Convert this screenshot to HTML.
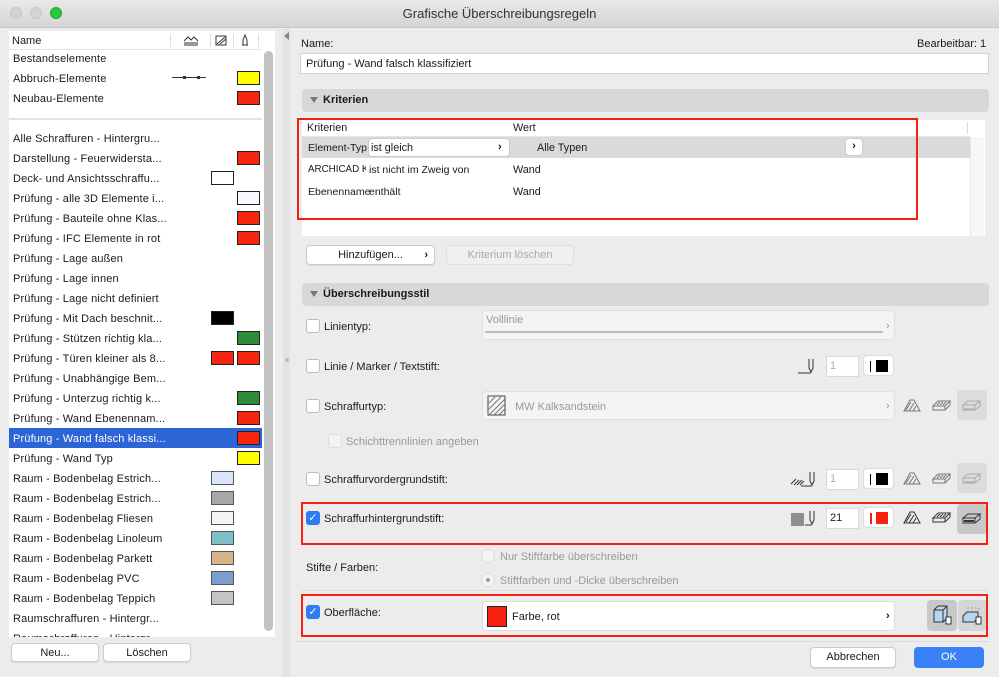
<!DOCTYPE html>
<html><head><meta charset="utf-8"><style>
*{box-sizing:border-box;margin:0;padding:0}
body{width:999px;height:677px;background:#ececec;font-family:"Liberation Sans",sans-serif;font-size:11px;color:#1a1a1a;position:relative;overflow:hidden}
.a{position:absolute}
.t{position:absolute;white-space:nowrap;line-height:14px}
.n{font-size:10.8px}
.sw{position:absolute;width:23px;height:14px;border:1px solid #222}
.red{background:#f62510}
.btn{position:absolute;background:#fff;border:1px solid #ccc;border-radius:4px;text-align:center;line-height:18px;box-shadow:0 1px 1px rgba(0,0,0,.08)}
.cb{position:absolute;width:14px;height:14px;border:1px solid #bdbdbd;border-radius:3px;background:#fff}
.cbon{background:#2f7bf5;border-color:#2f7bf5;color:#fff;font-size:11px;line-height:12px;text-align:center}
.bar{position:absolute;left:302px;width:687px;height:23px;background:#d8d8d8;border-radius:4px;font-weight:bold;line-height:23px;padding-left:21px;font-size:11px}
.tri{position:absolute;left:8px;top:8px;border-left:4px solid transparent;border-right:4px solid transparent;border-top:6px solid #777}
.dd{position:absolute;background:#f4f4f4;border:1px solid #e0e0e0;border-radius:4px}
.box{position:absolute;border:2px solid #f52010}
.in{position:absolute;background:#fff;border:1px solid #d8d8d8;height:21px;width:33px;line-height:19px;padding-left:3px;color:#aaa}
.cbtn{position:absolute;width:31px;height:21px;background:#fff;border:1px solid #ddd;border-radius:4px}
.gray{color:#999}
.ic{position:absolute}
</style></head><body>
<div class="a" style="left:0;top:0;width:999px;height:28px;background:linear-gradient(#e9e9e9,#d5d5d5);border-bottom:1px solid #c4c4c4"></div>
<div class="a" style="left:10px;top:7px;width:12px;height:12px;border-radius:6px;background:#d3d3d3;border:1px solid #c6c6c6"></div>
<div class="a" style="left:30px;top:7px;width:12px;height:12px;border-radius:6px;background:#d3d3d3;border:1px solid #c6c6c6"></div>
<div class="a" style="left:50px;top:7px;width:12px;height:12px;border-radius:6px;background:#2bc840;border:1px solid #22a934"></div>
<div class="t" style="left:0;width:999px;text-align:center;top:7px;font-size:13px;color:#333">Grafische Überschreibungsregeln</div>

<div class="a" style="left:9px;top:31px;width:266px;height:606px;background:#fff"></div>
<div class="a" style="left:9px;top:49px;width:253px;height:1px;background:#e4e4e4"></div>
<div class="t" style="left:12px;top:34px;font-size:11px">Name</div>
<div class="a" style="left:170px;top:34px;width:1px;height:13px;background:#ddd"></div>
<div class="a" style="left:210px;top:34px;width:1px;height:13px;background:#ddd"></div>
<div class="a" style="left:233px;top:34px;width:1px;height:13px;background:#ddd"></div>
<div class="a" style="left:258px;top:34px;width:1px;height:13px;background:#ddd"></div>
<svg class="a" style="left:183px;top:35px" width="16" height="11"><path d="M1 6 L5 2 L8 5 L11 2 L15 6 M1 8H15 M1 10H15" stroke="#333" fill="none"/></svg>
<svg class="a" style="left:215px;top:35px" width="13" height="11"><rect x="1" y="1" width="10" height="9" fill="none" stroke="#333"/><path d="M2 9 L10 2 M5 9 L11 4" stroke="#333"/></svg>
<svg class="a" style="left:240px;top:34px" width="10" height="12"><path d="M3 11V6L5 1L7 6V11Z M2 11H8" stroke="#333" fill="none"/></svg>
<div class="a" style="left:9px;top:118px;width:253px;height:2px;background:#e2e2e2"></div>
<div class="a" style="left:264px;top:51px;width:9px;height:580px;background:#c2c2c2;border-radius:5px"></div>
<div class="a" style="left:9px;top:428px;width:253px;height:20px;background:#2d64d6"></div>
<div class="a" style="left:172px;top:77px;width:34px;height:1px;background:#333"></div>
<div class="a" style="left:183px;top:76px;width:3px;height:3px;background:#333"></div>
<div class="a" style="left:197px;top:76px;width:3px;height:3px;background:#333"></div>
<div style="font-size:11px;letter-spacing:0.15px">
<div class="t" style="left:13px;top:52px">Bestandselemente</div>
<div class="t" style="left:13px;top:72px">Abbruch-Elemente</div>
<div class="t" style="left:13px;top:92px">Neubau-Elemente</div>
<div class="t" style="left:13px;top:132px">Alle Schraffuren - Hintergru...</div>
<div class="t" style="left:13px;top:152px">Darstellung - Feuerwidersta...</div>
<div class="t" style="left:13px;top:172px">Deck- und Ansichtsschraffu...</div>
<div class="t" style="left:13px;top:192px">Prüfung - alle 3D Elemente i...</div>
<div class="t" style="left:13px;top:212px">Prüfung - Bauteile ohne Klas...</div>
<div class="t" style="left:13px;top:232px">Prüfung - IFC Elemente in rot</div>
<div class="t" style="left:13px;top:252px">Prüfung - Lage außen</div>
<div class="t" style="left:13px;top:272px">Prüfung - Lage innen</div>
<div class="t" style="left:13px;top:292px">Prüfung - Lage nicht definiert</div>
<div class="t" style="left:13px;top:312px">Prüfung - Mit Dach beschnit...</div>
<div class="t" style="left:13px;top:332px">Prüfung - Stützen richtig kla...</div>
<div class="t" style="left:13px;top:352px">Prüfung - Türen kleiner als 8...</div>
<div class="t" style="left:13px;top:372px">Prüfung - Unabhängige Bem...</div>
<div class="t" style="left:13px;top:392px">Prüfung - Unterzug richtig k...</div>
<div class="t" style="left:13px;top:412px">Prüfung - Wand Ebenennam...</div>
<div class="t" style="left:13px;top:432px;color:#fff">Prüfung - Wand falsch klassi...</div>
<div class="t" style="left:13px;top:452px">Prüfung - Wand Typ</div>
<div class="t" style="left:13px;top:472px">Raum - Bodenbelag Estrich...</div>
<div class="t" style="left:13px;top:492px">Raum - Bodenbelag Estrich...</div>
<div class="t" style="left:13px;top:512px">Raum - Bodenbelag Fliesen</div>
<div class="t" style="left:13px;top:532px">Raum - Bodenbelag Linoleum</div>
<div class="t" style="left:13px;top:552px">Raum - Bodenbelag Parkett</div>
<div class="t" style="left:13px;top:572px">Raum - Bodenbelag PVC</div>
<div class="t" style="left:13px;top:592px">Raum - Bodenbelag Teppich</div>
<div class="t" style="left:13px;top:612px">Raumschraffuren - Hintergr...</div>
<div class="t" style="left:13px;top:632px;height:5px;overflow:hidden">Raumschraffuren - Hintergr...</div>
</div>
<div class="sw" style="left:237px;top:71px;background:#ffff00"></div>
<div class="sw red" style="left:237px;top:91px"></div>
<div class="sw red" style="left:237px;top:151px"></div>
<div class="sw" style="left:211px;top:171px;background:#fff"></div>
<div class="sw" style="left:237px;top:191px;background:#f8f8ff"></div>
<div class="sw red" style="left:237px;top:211px"></div>
<div class="sw red" style="left:237px;top:231px"></div>
<div class="sw" style="left:211px;top:311px;background:#000"></div>
<div class="sw" style="left:237px;top:331px;background:#2e8b3a"></div>
<div class="sw red" style="left:211px;top:351px"></div>
<div class="sw red" style="left:237px;top:351px"></div>
<div class="sw" style="left:237px;top:391px;background:#2e8b3a"></div>
<div class="sw red" style="left:237px;top:411px"></div>
<div class="sw red" style="left:237px;top:431px"></div>
<div class="sw" style="left:237px;top:451px;background:#ffff00"></div>
<div class="sw" style="left:211px;top:471px;background:#d9e4fb;border-color:#555"></div>
<div class="sw" style="left:211px;top:491px;background:#a8a8a8;border-color:#555"></div>
<div class="sw" style="left:211px;top:511px;background:#f4f4f4;border-color:#555"></div>
<div class="sw" style="left:211px;top:531px;background:#7fc0c8;border-color:#555"></div>
<div class="sw" style="left:211px;top:551px;background:#d8b48c;border-color:#555"></div>
<div class="sw" style="left:211px;top:571px;background:#7b9fcf;border-color:#555"></div>
<div class="sw" style="left:211px;top:591px;background:#c4c4c4;border-color:#555"></div>
<div class="btn" style="left:11px;top:643px;width:88px;height:19px">Neu...</div>
<div class="btn" style="left:103px;top:643px;width:88px;height:19px">Löschen</div>

<div class="a" style="left:283px;top:29px;width:7px;height:648px;background:#e3e3e3"></div>
<div class="a" style="left:284px;top:32px;border-top:4px solid transparent;border-bottom:4px solid transparent;border-right:5px solid #888"></div>
<div class="a" style="left:285px;top:358px;width:4px;height:4px;border-radius:2px;background:#bbb"></div>

<div class="t" style="left:301px;top:37px">Name:</div>
<div class="t" style="left:917px;top:37px">Bearbeitbar: 1</div>
<div class="a" style="left:300px;top:53px;width:689px;height:21px;background:#fff;border:1px solid #d4d4d4"></div>
<div class="t" style="left:306px;top:57px">Prüfung - Wand falsch klassifiziert</div>
<div class="bar" style="top:89px"><div class="tri"></div>Kriterien</div>

<div class="a" style="left:302px;top:120px;width:683px;height:116px;background:#fff"></div>
<div class="a" style="left:970px;top:137px;width:14px;height:99px;background:#f7f7f7;border-left:1px solid #e8e8e8"></div>
<div class="a" style="left:302px;top:136px;width:668px;height:1px;background:#e5e5e5"></div>
<div class="a" style="left:302px;top:137px;width:668px;height:21px;background:#dadada"></div>
<div class="a" style="left:967px;top:122px;width:1px;height:12px;background:#ddd"></div>
<div class="t n" style="left:307px;top:121px">Kriterien</div>
<div class="t n" style="left:513px;top:121px">Wert</div>
<div class="t" style="left:308px;top:141px;font-size:10.5px">Element-Typ</div>
<div class="a" style="left:368px;top:138px;width:142px;height:19px;background:#fff;border:1px solid #ccc;border-radius:4px"></div>
<div class="t n" style="left:371px;top:141px">ist gleich</div>
<div class="t" style="left:498px;top:140px;font-weight:bold">›</div>
<div class="t n" style="left:537px;top:141px">Alle Typen</div>
<div class="a" style="left:845px;top:138px;width:18px;height:18px;background:#fff;border:1px solid #ccc;border-radius:4px;text-align:center;line-height:15px;font-weight:bold">›</div>
<div class="t" style="left:308px;top:163px;font-size:9.8px;width:58px;overflow:hidden">ARCHICAD Kla...</div>
<div class="t" style="left:369px;top:163px;font-size:10.5px">ist nicht im Zweig von</div>
<div class="t n" style="left:513px;top:163px">Wand</div>
<div class="t" style="left:308px;top:185px;font-size:10.5px">Ebenenname</div>
<div class="t" style="left:369px;top:185px;font-size:10.5px">enthält</div>
<div class="t n" style="left:513px;top:185px">Wand</div>
<div class="box" style="left:297px;top:118px;width:621px;height:102px"></div>

<div class="btn" style="left:306px;top:245px;width:129px;height:20px">Hinzufügen...<span style="position:absolute;right:6px;font-weight:bold">›</span></div>
<div class="a" style="left:446px;top:245px;width:128px;height:20px;background:#f0f0f0;border:1px solid #ddd;border-radius:4px;text-align:center;line-height:18px;color:#aaa">Kriterium löschen</div>

<div class="bar" style="top:283px"><div class="tri"></div>Überschreibungsstil</div>

<div class="cb" style="left:306px;top:319px"></div>
<div class="t" style="left:324px;top:320px">Linientyp:</div>
<div class="dd" style="left:482px;top:310px;width:413px;height:30px"></div>
<div class="t gray" style="left:486px;top:313px">Volllinie</div>
<div class="a" style="left:485px;top:331px;width:398px;height:2px;background:#bbb"></div>
<div class="t gray" style="left:886px;top:319px">›</div>

<div class="cb" style="left:306px;top:359px"></div>
<div class="t" style="left:324px;top:360px">Linie / Marker / Textstift:</div>
<svg class="ic" style="left:797px;top:357px" width="24" height="18"><path d="M1 16H14 M12 2V11L14 15L16 11V2" stroke="#333" fill="none"/></svg>
<div class="in" style="left:826px;top:356px">1</div>
<div class="cbtn" style="left:863px;top:355px"><div class="a" style="left:6px;top:5px;width:1px;height:11px;background:#000"></div><div class="a" style="left:12px;top:4px;width:12px;height:12px;background:#000"></div></div>

<div class="cb" style="left:306px;top:399px"></div>
<div class="t" style="left:324px;top:400px">Schraffurtyp:</div>
<div class="dd" style="left:482px;top:391px;width:413px;height:29px"></div>
<svg class="ic" style="left:487px;top:395px" width="20" height="22"><rect x="1" y="1" width="17" height="19" fill="#f4f4f4" stroke="#444"/><path d="M2 8L8 2M2 14L14 2M2 20L18 4M7 20L18 9M12 20L18 14" stroke="#777"/></svg>
<div class="t gray" style="left:515px;top:400px">MW Kalksandstein</div>
<div class="t gray" style="left:886px;top:399px">›</div>
<svg class="ic" style="left:902px;top:398px" width="20" height="15"><path d="M2 13L8 2H12L18 13Z M4 12L9 4 M7 13L12 5 M11 13L14 8" stroke="#777" fill="none"/></svg>
<svg class="ic" style="left:931px;top:398px" width="20" height="15"><path d="M2 8L7 3H19L14 8Z M2 8V12H14V8 M14 12L19 7V3 M6 7L9 4 M9 7L12 4 M12 7L15 4" stroke="#777" fill="none"/></svg>
<div class="a" style="left:957px;top:390px;width:30px;height:30px;background:#dcdcdc;border-radius:4px"></div>
<svg class="ic" style="left:961px;top:398px" width="22" height="15"><path d="M2 7L7 3H19L14 7Z M2 7V12H14V7 M14 12L19 8V3 M3 11H13" stroke="#aaa" fill="none"/></svg>

<div class="cb" style="left:328px;top:434px;border-color:#ddd;background:#f2f2f2"></div>
<div class="t gray" style="left:346px;top:435px">Schichttrennlinien angeben</div>

<div class="cb" style="left:306px;top:472px"></div>
<div class="t" style="left:324px;top:473px">Schraffurvordergrundstift:</div>
<svg class="ic" style="left:790px;top:470px" width="30" height="18"><path d="M1 14L6 9M4 15L9 10M7 15L12 10M10 15L14 11 M11 16H22 M20 2V11L22 15L24 11V2" stroke="#333" fill="none"/></svg>
<div class="in" style="left:826px;top:469px">1</div>
<div class="cbtn" style="left:863px;top:468px"><div class="a" style="left:6px;top:5px;width:1px;height:11px;background:#000"></div><div class="a" style="left:12px;top:4px;width:12px;height:12px;background:#000"></div></div>
<svg class="ic" style="left:902px;top:471px" width="20" height="15"><path d="M2 13L8 2H12L18 13Z M4 12L9 4 M7 13L12 5 M11 13L14 8" stroke="#777" fill="none"/></svg>
<svg class="ic" style="left:931px;top:471px" width="20" height="15"><path d="M2 8L7 3H19L14 8Z M2 8V12H14V8 M14 12L19 7V3 M6 7L9 4 M9 7L12 4 M12 7L15 4" stroke="#777" fill="none"/></svg>
<div class="a" style="left:957px;top:463px;width:30px;height:30px;background:#dcdcdc;border-radius:4px"></div>
<svg class="ic" style="left:961px;top:471px" width="22" height="15"><path d="M2 7L7 3H19L14 7Z M2 7V12H14V7 M14 12L19 8V3 M3 11H13" stroke="#aaa" fill="none"/></svg>

<div class="cb cbon" style="left:306px;top:511px">✓</div>
<div class="t" style="left:324px;top:512px">Schraffurhintergrundstift:</div>
<div class="a" style="left:791px;top:513px;width:13px;height:13px;background:#8f8f8f"></div>
<svg class="ic" style="left:804px;top:509px" width="16" height="18"><path d="M1 16H8 M6 2V11L8 15L10 11V2" stroke="#333" fill="none"/></svg>
<div class="in" style="left:826px;top:508px;color:#222">21</div>
<div class="cbtn" style="left:863px;top:507px"><div class="a" style="left:6px;top:5px;width:2px;height:11px;background:#f52010"></div><div class="a" style="left:12px;top:4px;width:12px;height:12px;background:#f52010"></div></div>
<svg class="ic" style="left:902px;top:510px" width="20" height="15"><path d="M2 13L8 2H12L18 13Z M4 12L9 4 M7 13L12 5 M11 13L14 8" stroke="#333" fill="none"/></svg>
<svg class="ic" style="left:931px;top:510px" width="20" height="15"><path d="M2 8L7 3H19L14 8Z M2 8V12H14V8 M14 12L19 7V3 M6 7L9 4 M9 7L12 4 M12 7L15 4" stroke="#333" fill="none"/></svg>
<div class="a" style="left:957px;top:504px;width:30px;height:30px;background:#c8c8c8;border-radius:4px"></div>
<svg class="ic" style="left:961px;top:511px" width="22" height="15"><path d="M2 7L7 3H19L14 7Z M2 7V12H14V7 M14 12L19 8V3" stroke="#333" fill="none"/><rect x="3" y="9" width="10" height="2" fill="#333"/></svg>
<div class="box" style="left:301px;top:502px;width:687px;height:43px"></div>

<div class="t" style="left:306px;top:561px">Stifte / Farben:</div>
<div class="a" style="left:481px;top:549px;width:14px;height:14px;border-radius:7px;background:#f4f4f4;border:1px solid #ddd"></div>
<div class="t gray" style="left:500px;top:550px">Nur Stiftfarbe überschreiben</div>
<div class="a" style="left:481px;top:573px;width:14px;height:14px;border-radius:7px;background:#f4f4f4;border:1px solid #ddd"></div>
<div class="a" style="left:486px;top:578px;width:4px;height:4px;border-radius:2px;background:#999"></div>
<div class="t gray" style="left:500px;top:574px">Stiftfarben und -Dicke überschreiben</div>
<div class="a" style="left:301px;top:590px;width:687px;height:1px;background:#ddd"></div>

<div class="cb cbon" style="left:306px;top:605px">✓</div>
<div class="t" style="left:324px;top:606px">Oberfläche:</div>
<div class="a" style="left:482px;top:601px;width:413px;height:30px;background:#fff;border:1px solid #ddd;border-radius:4px"></div>
<div class="a" style="left:487px;top:606px;width:20px;height:21px;background:#f52010;border:1px solid #222"></div>
<div class="t" style="left:512px;top:610px">Farbe, rot</div>
<div class="t" style="left:886px;top:609px;font-weight:bold">›</div>
<div class="a" style="left:927px;top:600px;width:30px;height:31px;background:#c8c8c8;border-radius:4px"></div>
<svg class="ic" style="left:932px;top:604px" width="22" height="24"><path d="M2 6L6 2H15V14L11 18H2Z" fill="#b8d4f0" stroke="#333"/><path d="M2 6H11V18 M11 6L15 2" stroke="#333" fill="none"/><rect x="14" y="13" width="5" height="7" fill="#fff" stroke="#333"/></svg>
<div class="a" style="left:958px;top:600px;width:29px;height:31px;background:#d6d6d6;border-radius:4px"></div>
<svg class="ic" style="left:961px;top:604px" width="22" height="24"><path d="M6 4H18V8" stroke="#999" stroke-dasharray="2 2" fill="none"/><path d="M2 12L6 8H17V14L13 18H2Z" fill="#b8d4f0" stroke="#333"/><rect x="15" y="13" width="5" height="7" fill="#fff" stroke="#333"/></svg>
<div class="box" style="left:301px;top:594px;width:687px;height:43px"></div>

<div class="a" style="left:296px;top:641px;width:693px;height:1px;background:#dadada"></div>
<div class="btn" style="left:810px;top:647px;width:86px;height:21px;line-height:19px">Abbrechen</div>
<div class="a" style="left:914px;top:647px;width:70px;height:21px;background:#3a80f6;border-radius:4px;color:#fff;text-align:center;line-height:21px">OK</div>
</body></html>
